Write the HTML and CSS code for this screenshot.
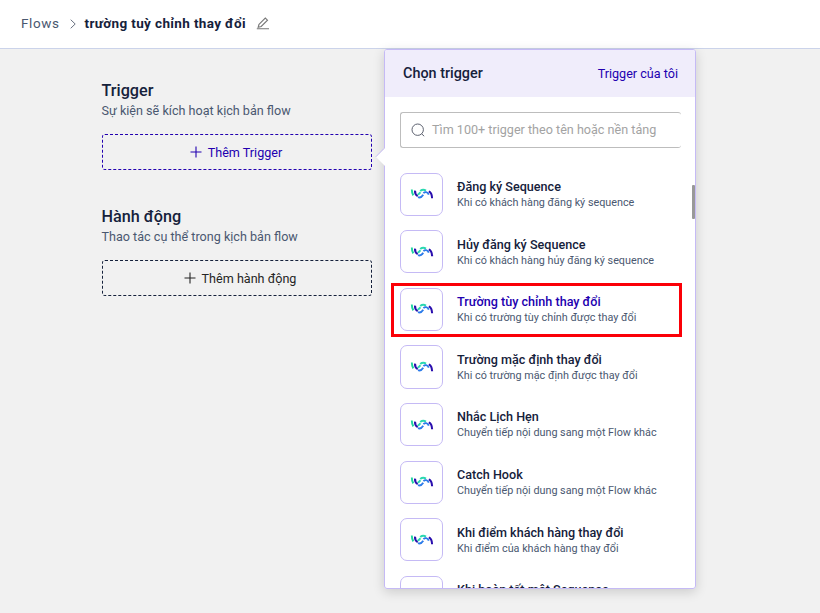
FILE: index.html
```html
<!DOCTYPE html>
<html lang="vi">
<head>
<meta charset="utf-8">
<title>Flows</title>
<link rel="stylesheet" href="styles.css">
</head>
<body>
<svg class="defs" width="0" height="0" aria-hidden="true">
  <symbol id="logo" viewBox="0 0 24 14">
    <g fill="none" stroke-width="1.9">
      <path d="M1.8 2.6C1.8 5 2.2 6.8 3.3 8.4" stroke="#1fd5a0"/>
      <path d="M5 3.6C4.9 6.2 5.6 8 7.8 9" stroke="#2a0fae" stroke-width="2.1"/>
      <path d="M7.6 7.6C9 7.4 9.6 6.4 10.4 5.2M10.2 4C12 2.5 14 2.4 16 3.6" stroke="#2ad8b0"/>
      <path d="M8 10.2C10.4 11 12 9.8 13.2 7.8M13.4 6.2C15 4.6 17.4 4.6 18.8 7.6" stroke="#2b7bea"/>
      <path d="M18.8 4.4C21 5.4 22 7.6 22.1 11.2" stroke="#2a0fae" stroke-width="2.1"/>
    </g>
  </symbol>
  <symbol id="plus" viewBox="0 0 12 12">
    <path d="M6 .5V11.5M.5 6H11.5" stroke="currentColor" stroke-width="1.1" fill="none"/>
  </symbol>
</svg>

<header class="topbar">
  <span class="crumb">Flows</span>
  <svg class="chevron" viewBox="0 0 6 10"><path d="M.7 .7L5.2 5L.7 9.3"/></svg>
  <span class="flow-name">trường tuỳ chỉnh thay đổi</span>
  <svg class="pencil" viewBox="0 0 14 14"><path d="M3 8.3L9.3 2L11.5 4.2L5.2 10.5L2.2 11.3ZM.8 12.8H13"/></svg>
</header>

<main class="builder">
  <section class="step">
    <h2>Trigger</h2>
    <p>Sự kiện sẽ kích hoạt kịch bản flow</p>
    <button class="add add-primary"><svg class="plus"><use href="#plus"/></svg>Thêm Trigger</button>
  </section>
  <section class="step">
    <h2>Hành động</h2>
    <p>Thao tác cụ thể trong kịch bản flow</p>
    <button class="add"><svg class="plus"><use href="#plus"/></svg>Thêm hành động</button>
  </section>
</main>

<aside class="popover">
  <svg class="arrow" viewBox="0 0 10 20"><path class="arrow-fill" d="M10 1L1 10L10 19Z"/><path class="arrow-edge" d="M9 1.5L.8 9.8"/></svg>
  <div class="panel">
    <div class="panel-head">
      <h3>Chọn trigger</h3>
      <a>Trigger của tôi</a>
    </div>
    <div class="search">
      <svg viewBox="0 0 14 14"><circle cx="6.7" cy="6.7" r="5.7"/><path d="M10.6 10.8L13.2 13.2"/></svg>
      <span>Tìm 100+ trigger theo tên hoặc nền tảng</span>
    </div>
    <ul class="list">
      <li><span class="tile"><svg><use href="#logo"/></svg></span><div><b>Đăng ký Sequence</b><small>Khi có khách hàng đăng ký sequence</small></div></li>
      <li><span class="tile"><svg><use href="#logo"/></svg></span><div><b>Hủy đăng ký Sequence</b><small>Khi có khách hàng hủy đăng ký sequence</small></div></li>
      <li class="active"><span class="tile"><svg><use href="#logo"/></svg></span><div><b>Trường tùy chỉnh thay đổi</b><small>Khi có trường tùy chỉnh được thay đổi</small></div></li>
      <li><span class="tile"><svg><use href="#logo"/></svg></span><div><b>Trường mặc định thay đổi</b><small>Khi có trường mặc định được thay đổi</small></div></li>
      <li><span class="tile"><svg><use href="#logo"/></svg></span><div><b>Nhắc Lịch Hẹn</b><small>Chuyển tiếp nội dung sang một Flow khác</small></div></li>
      <li><span class="tile"><svg><use href="#logo"/></svg></span><div><b>Catch Hook</b><small>Chuyển tiếp nội dung sang một Flow khác</small></div></li>
      <li><span class="tile"><svg><use href="#logo"/></svg></span><div><b>Khi điểm khách hàng thay đổi</b><small>Khi điểm của khách hàng thay đổi</small></div></li>
      <li><span class="tile"><svg><use href="#logo"/></svg></span><div><b>Khi hoàn tất một Sequence</b></div></li>
    </ul>
    <span class="thumb"></span>
  </div>
</aside>
</body>
</html>
```
FILE: styles.css
```css
*, *::after { box-sizing: border-box; }
body {
  margin: 0;
  height: 613px;
  overflow: hidden;
  background: #f1f1f1;
  color: #15213b;
  font-family: Roboto, "Liberation Sans", sans-serif;
}
.defs { position: absolute; }
h2, h3, p, ul { margin: 0; padding: 0; }

.topbar {
  display: flex;
  align-items: center;
  height: 49px;
  padding: 0 21px 2px;
  background: #fff;
  border-bottom: 1px solid #cbd3ea;
  font-size: 13.5px;
}
.crumb { color: #4a5870; letter-spacing: .6px; }
.chevron { width: 6px; height: 10px; margin: 1px 9px 0 10px; }
.chevron path { fill: none; stroke: #6a7280; }
.flow-name { font-size: 13.5px; font-weight: 700; letter-spacing: .36px; }
.pencil { width: 14px; height: 14px; margin-left: 10px; }
.pencil path { fill: none; stroke: #777; stroke-width: 1.1; }

.builder {
  display: flex;
  flex-direction: column;
  gap: 36px;
  width: 270px;
  margin: 31px 0 0 102px;
}
.step { height: 90px; }
.step h2 { margin-left: -.5px; font-size: 16.2px; font-weight: 500; line-height: 22px; }
.step p { margin-left: -.5px; font-size: 12.6px; line-height: 18px; color: #4a5870; }
.add {
  display: flex;
  align-items: center;
  justify-content: center;
  gap: 6px;
  width: 270px;
  height: 36px;
  margin-top: 14px;
  padding: 0 0 0 6px;
  border: 1px dashed #15213b;
  border-radius: 3px;
  background: none;
  color: #252525;
  font: 12.6px Roboto, "Liberation Sans", sans-serif;
}
.add-primary { padding: 0 2px 0 0; border-color: #2200b0; color: #2200b0; }
.plus { width: 12px; height: 12px; }

.popover {
  position: absolute;
  left: 384px;
  top: 49px;
  width: 312px;
  height: 540px;
  border-radius: 3px;
  box-shadow: 0 3px 12px rgba(0, 0, 0, .16);
}
.panel {
  position: relative;
  height: 100%;
  overflow: hidden;
  border: 1px solid #c5baf5;
  border-radius: 3px;
  background: #fff;
}
.arrow { position: absolute; z-index: 1; left: -9px; top: 98px; width: 10px; height: 20px; }
.arrow-fill { fill: #fff; }
.arrow-edge { fill: none; stroke: #c5baf5; }
.panel-head {
  display: flex;
  align-items: center;
  justify-content: space-between;
  height: 47px;
  padding: 0 17px 0 18px;
  background: #f0edfb;
}
.panel-head h3 { font-size: 14.4px; font-weight: 500; }
.panel-head a { font-size: 12.6px; color: #2200b0; }
.search {
  display: flex;
  align-items: center;
  gap: 7px;
  width: 281px;
  height: 36px;
  margin: 15px 0 0 15px;
  padding: 0 0 1px 10px;
  border: 1px solid #bdbdbd;
  border-right: 0;
  border-radius: 3px;
  color: #a3a3a3;
  font-size: 12.6px;
}
.search svg { width: 14px; height: 14px; }
.search circle, .search path { fill: none; stroke: #5d6270; }
.list { margin: 24.6px 0 0 15px; list-style: none; }
.list li { position: relative; display: flex; gap: 14px; height: 57.6px; }
.tile {
  display: flex;
  align-items: center;
  justify-content: center;
  flex: none;
  width: 43px;
  height: 43.2px;
  border: 1px solid #c5baf5;
  border-radius: 7px;
}
.tile svg { width: 24px; height: 14px; }
.list div { display: flex; flex-direction: column; padding-top: 6.4px; white-space: nowrap; }
.list b { font-size: 12.6px; font-weight: 500; line-height: 16px; }
.list small { font-size: 10.8px; line-height: 15px; color: #4a5870; }
.active b { color: #2200b0; }
.active::after {
  content: "";
  position: absolute;
  left: -9px;
  top: -5px;
  width: 291px;
  height: 54px;
  border: 3px solid #fb0007;
}
.thumb {
  position: absolute;
  right: 0;
  top: 135px;
  width: 3px;
  height: 34px;
  border-radius: 1px;
  background: #999;
}
```
